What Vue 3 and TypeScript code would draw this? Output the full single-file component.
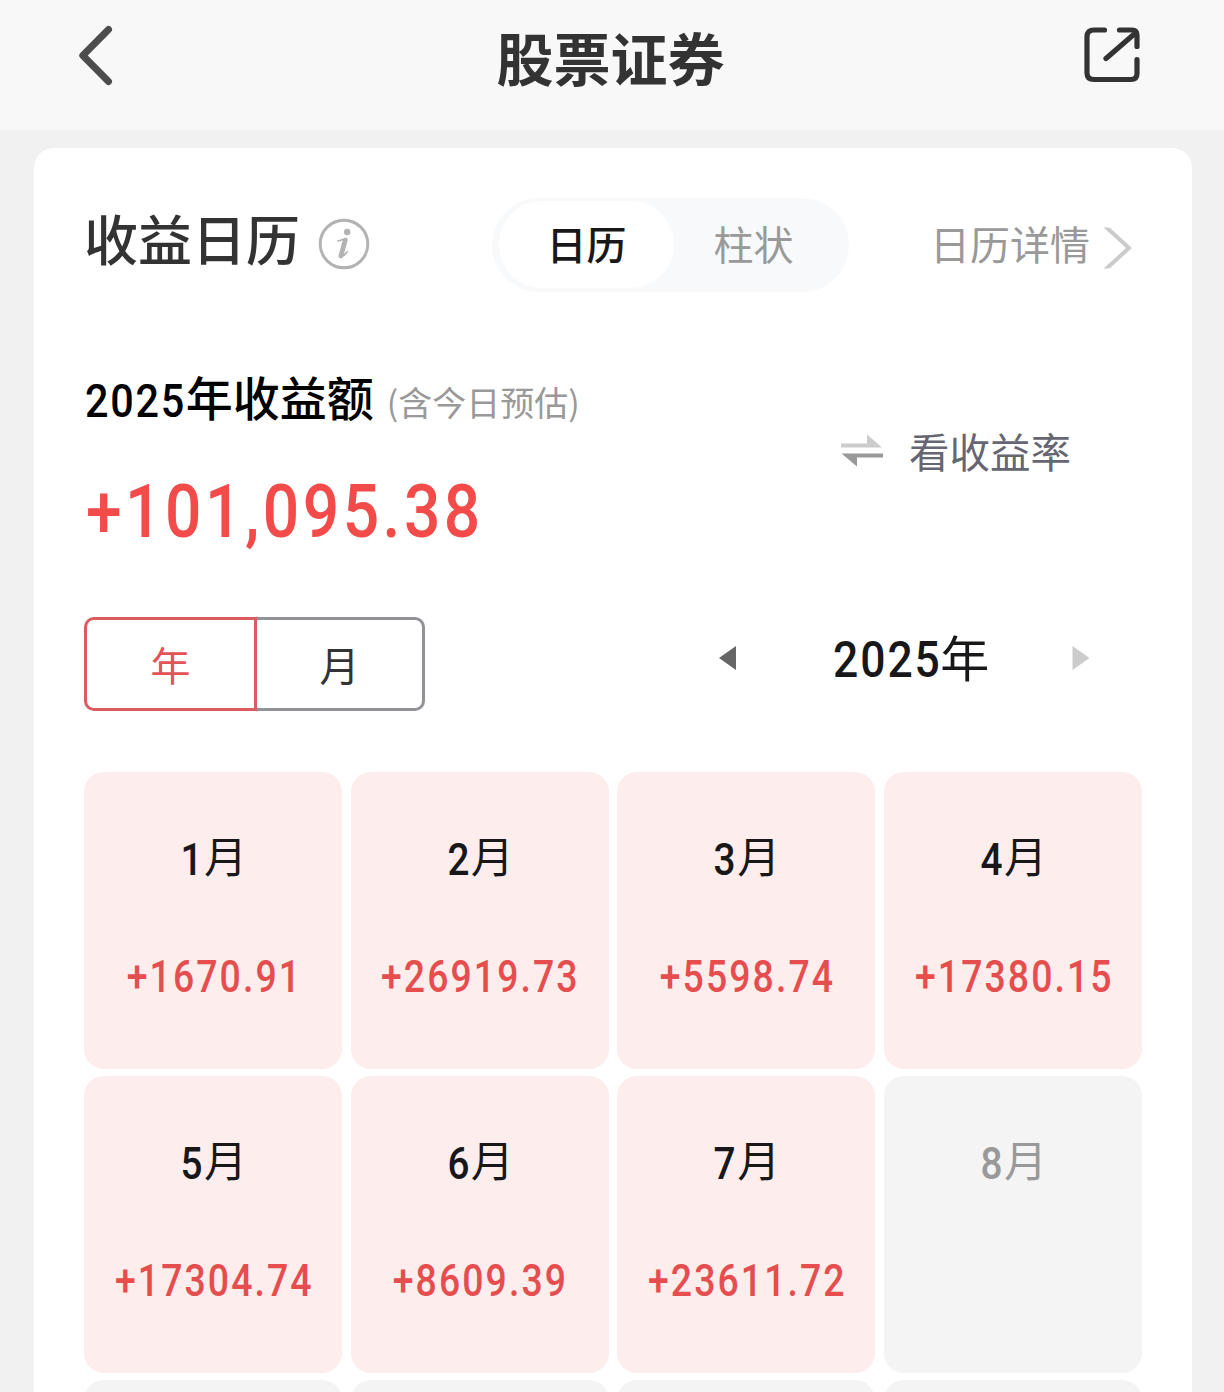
<script setup lang="ts">
import { ref } from 'vue'

interface MonthCell {
  month: number
  value: string
}

const view = ref<'calendar' | 'bar'>('calendar')
const period = ref<'year' | 'month'>('year')
const year = ref(2025)

const months: MonthCell[] = [
  { month: 1, value: '+1670.91' },
  { month: 2, value: '+26919.73' },
  { month: 3, value: '+5598.74' },
  { month: 4, value: '+17380.15' },
  { month: 5, value: '+17304.74' },
  { month: 6, value: '+8609.39' },
  { month: 7, value: '+23611.72' },
  { month: 8, value: '' },
]
</script>

<template>
  <div class="page">
    <header class="navbar">
      <svg class="back" width="40" height="64" viewBox="0 0 40 64">
        <path d="M33.500 5.500 L7.800 31.500 L33.500 57.500" fill="none" stroke="#4d4d4d" stroke-width="7" stroke-linecap="round" stroke-linejoin="round" />
      </svg>
      <h1>股票证券</h1>
      <svg class="share" width="60" height="60" viewBox="0 0 60 60" fill="none" stroke="#333" stroke-width="5.200" stroke-linecap="round" stroke-linejoin="round">
        <path d="M22.500 5 H12 Q5 5 5 11.500 V48 Q5 54.500 12 54.500 H49 Q55 54.500 55 48.500 V34.500" />
        <path d="M37.500 5 H50 Q55 5 55 10.500 V21.500" />
        <path d="M24 33.500 L54 7.500" />
      </svg>
    </header>

    <main class="card">
      <div class="top">
        <h2>收益日历</h2>
        <svg class="info" width="52" height="52" viewBox="0 0 52 52">
          <circle cx="26" cy="26" r="23.800" fill="none" stroke="#b3b3b3" stroke-width="3" />
          <circle cx="29.200" cy="14" r="3.200" fill="#b3b3b3" />
          <path d="M20 23 L28.500 20.500 L24.300 35.500 Q23.800 38.800 25.800 37.600 L29 34" fill="none" stroke="#b3b3b3" stroke-width="1.800" stroke-linejoin="round" stroke-linecap="round" />
          <path d="M27.200 22.300 L22.900 37.900" fill="none" stroke="#b3b3b3" stroke-width="4.800" stroke-linecap="round" />
        </svg>
        <div class="toggle">
          <button :class="{ on: view === 'calendar' }" @click="view = 'calendar'">日历</button>
          <button :class="{ on: view === 'bar' }" @click="view = 'bar'">柱状</button>
        </div>
        <a class="detail">
          <span>日历详情</span>
          <svg width="30" height="44" viewBox="0 0 30 44">
            <path d="M0.500 1.500 H6.500 L29 22 L6.500 42.500 H0.500 L23 22 Z" fill="#ccc" />
          </svg>
        </a>
      </div>

      <div class="summary">
        <div class="sum-left">
          <p class="sum-title"><span class="num">{{ year }}</span>年收益额<small>(含今日预估)</small></p>
          <p class="total"><span class="num">+101,095.38</span></p>
        </div>
        <div class="switch">
          <svg width="44" height="34" viewBox="0 0 44 34">
            <path d="M1 9.500 H27 V0.500 L42 13.500 H1 Z" fill="#ccc" />
            <path d="M43 19.500 H1.500 L17 32.500 V23.500 H43 Z" fill="#999" />
          </svg>
          <span>看收益率</span>
        </div>
      </div>

      <div class="controls">
        <div class="segments">
          <button :class="{ on: period === 'year' }" @click="period = 'year'">年</button>
          <button :class="{ on: period === 'month' }" @click="period = 'month'">月</button>
        </div>
        <div class="pager">
          <svg width="18" height="24" viewBox="0 0 18 24" @click="year--"><path d="M0 12 L17 0 V24 Z" fill="#666" /></svg>
          <span class="year"><span class="num">{{ year }}</span>年</span>
          <svg width="18" height="24" viewBox="0 0 18 24"><path d="M17.500 12 L0.500 0 V24 Z" fill="#ccc" /></svg>
        </div>
      </div>

      <div class="grid">
        <div v-for="m in months" :key="m.month" class="cell" :class="{ gain: m.value }">
          <div class="month"><span class="num">{{ m.month }}</span>月</div>
          <div class="value"><span class="num">{{ m.value }}</span></div>
        </div>
        <div v-for="n in 4" :key="'rest' + n" class="cell"></div>
      </div>
    </main>
  </div>
</template>

<style>
body {
  margin: 0;
  background: #f1f1f1;
}
</style>

<style scoped>
.page {
  width: 1224px;
  height: 1392px;
  overflow: hidden;
  background: #f1f1f1;
  font-family: 'Noto Sans CJK SC', sans-serif;
  color: #333;
}
h1, h2, p {
  margin: 0;
}
button {
  padding: 0;
  border: 0;
  background: none;
  font: inherit;
  color: inherit;
}
svg {
  display: block;
  flex: none;
}
.num {
  display: inline-block;
  font-family: Roboto, sans-serif;
  font-weight: 500;
  white-space: nowrap;
}
.navbar {
  box-sizing: border-box;
  height: 130px;
  padding: 0 82px 0 75px;
  display: flex;
  justify-content: space-between;
  background: #f8f8f8;
}
.back {
  margin-top: 24px;
}
.navbar h1 {
  margin-left: 24px;
  font-size: 57px;
  line-height: 112px;
  font-weight: 700;
}
.share {
  margin-top: 25px;
}
.card {
  box-sizing: border-box;
  width: 1158px;
  height: 1300px;
  margin: 18px 0 0 34px;
  padding: 50px 50px 0;
  border-radius: 20px;
  background: #fff;
}
.top {
  display: flex;
  height: 94px;
}
.top h2 {
  width: 216px;
  font-size: 54px;
  line-height: 80px;
  font-weight: 500;
  white-space: nowrap;
}
.info {
  margin: 20px 0 0 18px;
}
.toggle {
  box-sizing: border-box;
  width: 357px;
  height: 94px;
  margin-left: 122px;
  padding: 3px 7px 4px;
  display: flex;
  border-radius: 47px;
  background: #f8f9fb;
  font-size: 40px;
  color: #999;
}
.toggle button {
  width: 175px;
  height: 87px;
  padding-bottom: 3px;
  border-radius: 44px;
  line-height: 84px;
}
.toggle button + button {
  width: 159px;
}
.toggle .on {
  background: #fff;
  color: #18181a;
  font-weight: 500;
}
.detail {
  display: flex;
  margin-left: 81px;
  font-size: 40px;
  line-height: 90px;
  color: #999;
}
.detail svg {
  margin: 28px 0 0 13px;
}
.summary {
  display: flex;
  justify-content: space-between;
  height: 325px;
}
.sum-title {
  margin-top: 70px;
  height: 68px;
  line-height: 68px;
  font-size: 47px;
  font-weight: 500;
  color: #000;
  white-space: nowrap;
}
.sum-title .num {
  margin-left: 1px;
  transform: scaleX(0.88);
  transform-origin: left;
  letter-spacing: 2px;
  margin-right: -14px;
  line-height: 1;
  vertical-align: -1px;
}
.sum-title small {
  margin-left: 13px;
  font-size: 34px;
  font-weight: 400;
  color: #999;
}
.total {
  margin-top: 20px;
  height: 110px;
  line-height: 110px;
  font-size: 74.500px;
  color: #f34a4a;
}
.total .num {
  margin-left: 2px;
  transform: scaleX(0.86);
  transform-origin: left;
  letter-spacing: 4.100px;
}
.switch {
  display: flex;
  margin: 120px 71px 0 0;
  height: 80px;
  line-height: 78px;
  font-size: 40.500px;
  color: #666672;
}
.switch svg {
  margin: 22px 25px 0 0;
}
.controls {
  display: flex;
  height: 155px;
}
.segments {
  display: flex;
  width: 341px;
  height: 94px;
  font-size: 40px;
}
.segments button {
  box-sizing: border-box;
  width: 168px;
  border: 3px solid #919298;
  border-left: 0;
  border-radius: 0 10px 10px 0;
  line-height: 88px;
  padding: 0;
}
.segments button:first-child {
  width: 173px;
  border-left: 3px solid #919298;
  border-radius: 10px 0 0 10px;
}
.segments .on,
.segments .on:first-child {
  border-color: #dc5c5e;
  color: #e35357;
}
.pager {
  display: flex;
  justify-content: space-between;
  width: 371px;
  height: 82px;
  margin-left: 294px;
  align-items: center;
  font-size: 49px;
  color: #18181a;
}
.year {
  margin: -5px 0 0 13px;
}
.pager .num {
  font-size: 50.500px;
  transform: scaleX(0.88);
  transform-origin: left;
  letter-spacing: 2.200px;
  margin-right: -16px;
}
.grid {
  display: grid;
  grid-template-columns: repeat(4, 258px);
  grid-auto-rows: 297px;
  justify-content: space-between;
  row-gap: 7px;
}
.cell {
  border-radius: 20px;
  background: #f4f4f4;
  color: #999;
  text-align: center;
}
.cell.gain {
  background: #fdeeed;
  color: #18181a;
}
.month {
  padding-top: 47px;
  height: 72px;
  line-height: 70px;
  font-size: 43px;
}
.month .num {
  font-size: 44px;
  transform: scaleX(0.88);
  line-height: 1;
  vertical-align: -2px;
}
.value {
  margin-top: 47px;
  height: 70px;
  line-height: 70px;
  font-size: 44.500px;
  color: #e54d4e;
}
.value .num {
  margin-left: 2px;
  transform: scaleX(0.84);
  letter-spacing: 2.500px;
}
</style>
